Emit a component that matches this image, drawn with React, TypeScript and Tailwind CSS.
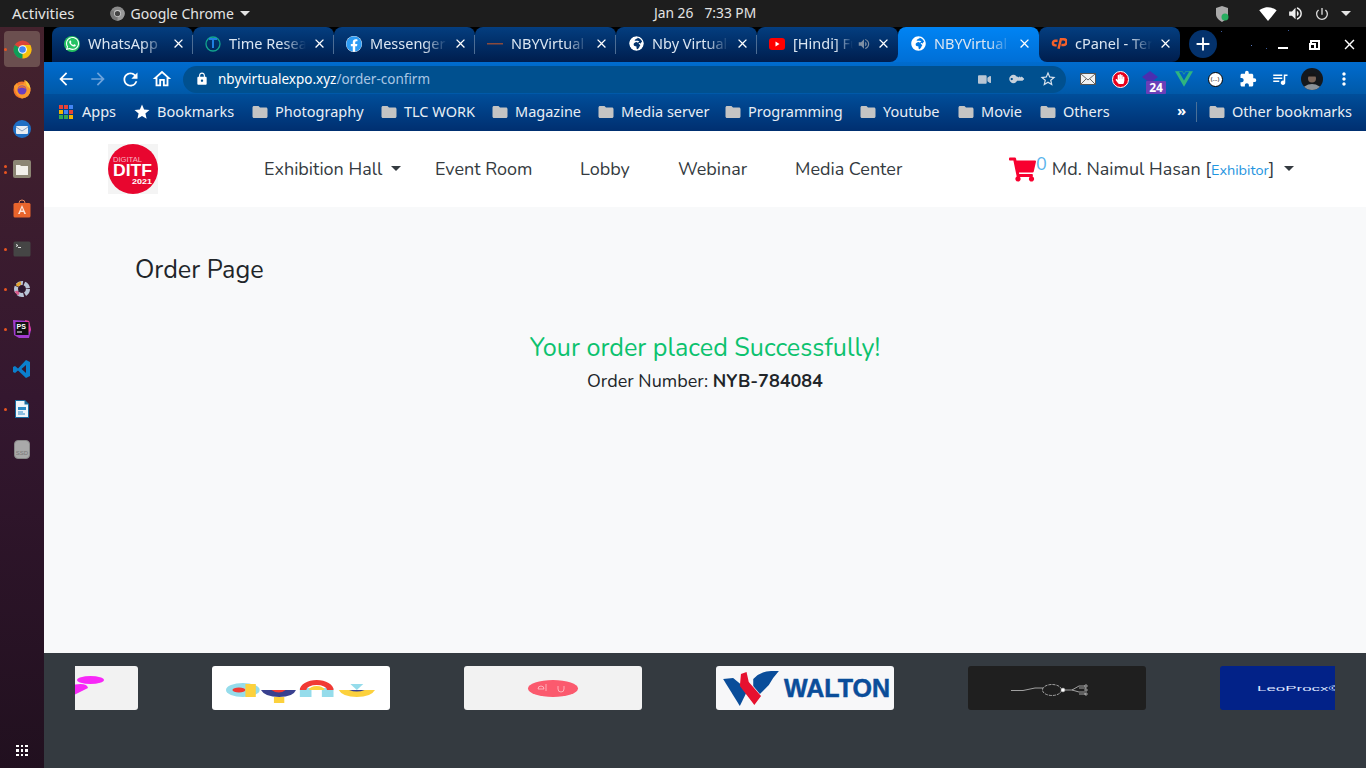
import React from "react";
import { FaFacebook, FaGlobeAfrica, FaHandPaper, FaKey, FaShoppingCart, FaVideo, FaWhatsapp } from "react-icons/fa";
import { SiVuedotjs } from "react-icons/si";
import {
  MdAdd,
  MdArrowBack,
  MdArrowForward,
  MdClose,
  MdExtension,
  MdFolder,
  MdLock,
  MdMoreVert,
  MdOutlineHome,
  MdPowerSettingsNew,
  MdQueueMusic,
  MdRefresh,
  MdSignalWifi4Bar,
  MdStar,
  MdStarBorder,
  MdVolumeUp,
} from "react-icons/md";

const ChromeLogo = ({ size = 20, grey = false }: { size?: number; grey?: boolean }) => (
  <svg width={size} height={size} viewBox="0 0 20 20">
    <circle cx="10" cy="10" r="9.5" fill={grey ? "#8a8a8a" : "#db4437"} />
    <path d="M10 10 L1.8 5.2 A9.5 9.5 0 0 0 10 19.5 L14.8 11z" fill={grey ? "#777" : "#0f9d58"} />
    <path d="M10 10 L10 19.5 A9.5 9.5 0 0 0 18.2 5.2 L10 5.2z" fill={grey ? "#999" : "#f4c20d"} />
    <circle cx="10" cy="10" r="4.6" fill={grey ? "#ccc" : "#fff"} />
    <circle cx="10" cy="10" r="3.5" fill={grey ? "#444" : "#4285f4"} />
  </svg>
);

const DockItem = ({ dots = 0, active = false, children }: { dots?: number; active?: boolean; children: React.ReactNode }) => (
  <div className="relative h-10 w-[44px] flex items-center justify-center">
    {dots > 0 && (
      <div className="absolute left-[4px] top-0 bottom-0 flex flex-col justify-center gap-[3px]">
        {Array.from({ length: dots }).map((_, i) => (
          <span key={i} className="block w-[3px] h-[3px] rounded-full bg-[#e95420]" />
        ))}
      </div>
    )}
    <div className={`w-9 h-9 flex items-center justify-center rounded ${active ? "bg-[#6b4f4f]" : ""}`}>{children}</div>
  </div>
);

const Dock = () => (
  <div className="w-[44px] shrink-0 bg-gradient-to-b from-[#44222d] via-[#34172f] to-[#21101f] flex flex-col items-center pt-[2px] relative">
    <DockItem dots={1} active>
      <ChromeLogo size={19} />
    </DockItem>
    <DockItem>
      <svg width="20" height="20" viewBox="0 0 20 20">
        <circle cx="10" cy="11" r="8.500" fill="#f2762a" />
        <path d="M2 7q1 9 8 12.500 8-1 8.500-8.500Q18 4 12 1q1 3-1 4-4 0-5 2L5 4z" fill="#fb9a2e" />
        <path d="M13 1q5 3 5.500 9L15 7z" fill="#fcc93c" />
        <circle cx="10" cy="11" r="4.500" fill="#6b3fc0" />
        <path d="M6 10q4-3 8 0-1-3-4-3t-4 3z" fill="#f2762a" />
      </svg>
    </DockItem>
    <DockItem>
      <svg width="20" height="20" viewBox="0 0 20 20">
        <circle cx="10" cy="10" r="9" fill="#1f6fc4" />
        <rect x="4" y="7" width="12" height="8" rx="1" fill="#e8edf3" />
        <path d="M4 8l6 4 6-4" fill="none" stroke="#8aa4c0" />
      </svg>
    </DockItem>
    <DockItem dots={2}>
      <svg width="20" height="20" viewBox="0 0 20 20">
        <rect x="1" y="1" width="18" height="18" rx="2" fill="#8c8674" />
        <path d="M4 6h4l1 1h7v9H4z" fill="#f2f0ea" />
      </svg>
    </DockItem>
    <DockItem>
      <svg width="20" height="20" viewBox="0 0 20 20">
        <path d="M7 4a3 3 0 016 0" fill="none" stroke="#e8875a" />
        <rect x="1.500" y="4" width="17" height="14.500" rx="1.500" fill="#e8642c" />
        <path d="M10 6l4 9h-1.800l-.7-2H8.500l-.7 2H6zM9 11.500h2L10 8.700z" fill="#fbe3d8" />
      </svg>
    </DockItem>
    <DockItem dots={1}>
      <svg width="20" height="20" viewBox="0 0 20 20">
        <rect x="1.500" y="2.500" width="17" height="15" rx="1.500" fill="#454545" />
        <path d="M4 5.500l2 1-2 1M6 8.500h3" fill="none" stroke="#eee" strokeWidth="0.900" />
      </svg>
    </DockItem>
    <DockItem dots={1}>
      <svg width="20" height="20" viewBox="0 0 20 20">
        <circle cx="10" cy="10" r="6" fill="none" stroke="#b9c4d6" strokeWidth="4" strokeDasharray="6 1.500" />
        <path d="M5 7a6 6 0 014-3" fill="none" stroke="#e3a32c" strokeWidth="3" />
        <path d="M4 12a6 6 0 003 3" fill="none" stroke="#d95b8c" strokeWidth="3" />
        <circle cx="10" cy="10" r="3" fill="#2b1830" />
      </svg>
    </DockItem>
    <DockItem dots={1}>
      <svg width="20" height="20" viewBox="0 0 20 20">
        <path d="M1 1l16 1 2 9-2 8-10 0-5-3z" fill="#a23bd0" />
        <path d="M13 1l4 1 2 9-3 3z" fill="#e83d9b" />
        <rect x="3.500" y="3" width="13" height="13" fill="#111" />
        <text x="4.500" y="9.500" fontSize="7" fontWeight="700" fill="#fff" fontFamily="Liberation Sans, sans-serif">PS</text>
        <rect x="5" y="12.500" width="5" height="1" fill="#fff" />
      </svg>
    </DockItem>
    <DockItem>
      <svg width="20" height="20" viewBox="0 0 20 20">
        <path d="M14 1l4 2v14l-4 2-8-7.500-3 2.500-2-1v-5l2-1 3 2.500zM14 6l-4.500 4 4.500 4z" fill="#0b7fcc" />
      </svg>
    </DockItem>
    <DockItem dots={1}>
      <svg width="20" height="20" viewBox="0 0 20 20">
        <path d="M3 1h10l4 4v14H3z" fill="#176a9e" />
        <path d="M4 2h8.500v3.500H16V18H4z" fill="#eef5fa" />
        <rect x="6" y="8" width="8" height="3" fill="#2a8ac6" />
        <rect x="6" y="12.500" width="5" height="1" fill="#2a8ac6" />
        <rect x="6" y="14.500" width="7" height="1" fill="#2a8ac6" />
      </svg>
    </DockItem>
    <DockItem>
      <div className="w-[16px] h-[19px] rounded-sm bg-[#a9a9a9] border border-[#888] flex items-end justify-center">
        <span className="text-[6px] leading-[9px] text-[#777] font-['Liberation_Sans',sans-serif]">SSD</span>
      </div>
    </DockItem>
    <div className="absolute bottom-[12px] left-[16px] grid grid-cols-3 gap-[2px]">
      {Array.from({ length: 9 }).map((_, i) => (
        <span key={i} className="block w-[2.500px] h-[2.500px] bg-white" />
      ))}
    </div>
  </div>
);

const tabs: { title: string; icon: React.ReactNode; audio?: boolean; active?: boolean }[] = [
  {
    title: "WhatsApp",
    icon: (
      <span className="w-4 h-4 rounded-full bg-[#25c262] flex items-center justify-center">
        <FaWhatsapp size={15} className="text-white" />
      </span>
    ),
  },
  {
    title: "Time Research",
    icon: (
      <svg width="16" height="16" viewBox="0 0 16 16">
        <circle cx="8" cy="8" r="7" fill="none" stroke="#12a58e" strokeWidth="1.300" />
        <path d="M4 3h8M8 3v9" stroke="#1f7fe0" strokeWidth="2" />
      </svg>
    ),
  },
  { title: "Messenger", icon: <FaFacebook size={16} className="text-[#2d9cf4] bg-white rounded-full" /> },
  {
    title: "NBYVirtual Expo",
    icon: (
      <svg width="16" height="16" viewBox="0 0 16 16">
        <rect x="0" y="7" width="16" height="1.500" fill="#8a4a3c" />
      </svg>
    ),
  },
  { title: "Nby Virtual Expo", icon: <FaGlobeAfrica size={15} className="text-white bg-[#03346e] rounded-full" /> },
  {
    title: "[Hindi] Full Course",
    icon: (
      <svg width="16" height="12" viewBox="0 0 16 12">
        <rect width="16" height="12" rx="3" fill="#f00" />
        <path d="M6.500 3.500l4 2.500-4 2.500z" fill="#fff" />
      </svg>
    ),
    audio: true,
  },
  { title: "NBYVirtual Expo", icon: <FaGlobeAfrica size={15} className="text-white" />, active: true },
  {
    title: "cPanel - Terminal",
    icon: (
      <svg width="17" height="13" viewBox="0 0 17 13" fill="none" stroke="#f4602a" strokeWidth="2.600">
        <path d="M7 3.500H4.500a2.500 2.500 0 000 5H6" />
        <path d="M8 12l2.500-10h3a2.500 2.500 0 010 6H11" />
      </svg>
    ),
  },
];

const Tab = ({ title, icon, audio, active, before, after }: { title: string; icon: React.ReactNode; audio?: boolean; active?: boolean; before?: boolean; after?: boolean }) => (
  <div
    className={`relative w-[141px] h-full shrink-0 flex items-center pl-[12px] pr-[7px] pb-[2px] rounded-t-[8px] ${
      active
        ? "z-0 bg-gradient-to-b from-[#0084f4] to-[#006fd6] before:absolute before:-left-[8px] before:bottom-0 before:w-[8px] before:h-[8px] before:bg-[#0070d8] after:absolute after:-right-[8px] after:bottom-0 after:w-[8px] after:h-[8px] after:bg-[#0070d8]"
        : "z-10 bg-gradient-to-b from-[#043e80] to-[#001e4e]"
    } ${before ? "rounded-br-[8px]" : ""} ${after ? "rounded-b-[8px]" : ""}`}
  >
    <span className="w-4 h-4 shrink-0 flex items-center justify-center">{icon}</span>
    <span className="ml-[8px] flex-1 min-w-0 overflow-hidden whitespace-nowrap text-[14.500px] text-[#dbe6f2] [mask-image:linear-gradient(to_right,black_70%,transparent_100%)]">
      {title}
    </span>
    {audio && <MdVolumeUp size={14} className="text-[#7f8fa3] -mr-[1px] ml-[4px] shrink-0" />}
    <MdClose size={15} className="text-white shrink-0 ml-[6px]" />
    {!active && !before && !after && <span className="absolute right-0 top-[8px] bottom-[8px] w-px bg-[#4d6d94]" />}
  </div>
);

const TabStrip = () => (
  <div className="h-[35px] bg-black flex items-stretch pl-[8px] relative">
    {tabs.map((t, i) => (
      <Tab key={i} {...t} before={i === 5} after={i === 7} />
    ))}
    <div className="ml-[9px] mt-[3px] w-7 h-7 rounded-full bg-[#04326c] flex items-center justify-center">
      <MdAdd size={22} className="text-white" />
    </div>
    <div className="flex-1 flex items-center justify-end pr-[8px] gap-[17px] text-white">
      <span className="block w-[10px] h-[2px] bg-white mt-[6px] mr-[5px]" />
      <span className="relative block w-[10px] h-[10px] border-2 border-white mr-[4px]">
        <span className="absolute -left-[3px] top-[1px] w-[7px] h-[7px] bg-black border-2 border-white" />
      </span>
      <MdClose size={17} />
    </div>
    <span className="absolute left-[1177px] top-[4px] w-px h-px bg-[#3b5a9a]" />
    <span className="absolute left-[1207px] top-[18px] w-px h-px bg-[#5a7ac0]" />
    <span className="absolute left-[1222px] top-[21px] w-px h-px bg-[#3b5a9a]" />
    <span className="absolute left-[1244px] top-[3px] w-px h-px bg-[#3b5a9a]" />
  </div>
);

const ToolIcon = ({ children, className = "" }: { children: React.ReactNode; className?: string }) => (
  <div className={`w-8 h-8 shrink-0 flex items-center justify-center relative ${className}`}>{children}</div>
);

const Toolbar = () => (
  <div className="h-[32px] bg-gradient-to-b from-[#006ccf] to-[#0059a8] flex items-center pl-[6px] pt-[2px] text-white">
    <ToolIcon>
      <MdArrowBack size={20} />
    </ToolIcon>
    <ToolIcon>
      <MdArrowForward size={20} className="text-[#6ea4dc]" />
    </ToolIcon>
    <ToolIcon>
      <MdRefresh size={21} />
    </ToolIcon>
    <ToolIcon>
      <MdOutlineHome size={22} />
    </ToolIcon>
    <div className="ml-[5px] w-[883px] h-[27px] rounded-full bg-[#00508f] flex items-center pl-[12px] pr-[2px]">
      <MdLock size={14} className="text-white" />
      <span className="ml-[9px] text-[13.500px] text-white">
        nbyvirtualexpo.xyz<span className="text-[#a9c6e4]">/order-confirm</span>
      </span>
      <div className="ml-auto flex items-center">
        <ToolIcon>
          <FaVideo size={13} className="text-[#b9c6d4]" />
        </ToolIcon>
        <ToolIcon>
          <FaKey size={12} className="text-[#c6d1dc] -rotate-[135deg]" />
        </ToolIcon>
        <ToolIcon>
          <MdStarBorder size={18} className="text-[#dbe4ee]" />
        </ToolIcon>
      </div>
    </div>
    <ToolIcon className="ml-[6px]">
      <svg width="16" height="12" viewBox="0 0 16 12">
        <rect width="16" height="12" fill="#555" />
        <rect x="1" y="1" width="14" height="10" fill="#f2f2f2" />
        <path d="M1 1l7 6 7-6M1 11l5-5M15 11l-5-5" fill="none" stroke="#666" />
      </svg>
    </ToolIcon>
    <ToolIcon>
      <span className="w-[17px] h-[17px] rounded-full bg-[#e8001c] flex items-center justify-center border border-white">
        <FaHandPaper size={10} className="text-white" />
      </span>
    </ToolIcon>
    <ToolIcon>
      <svg width="16" height="12" viewBox="0 0 16 12" className="-mt-[4px] -ml-[4px]">
        <path d="M8 0l8 6-8 6-8-6z" fill="#4a2fb0" />
      </svg>
      <span className="absolute left-[10px] top-[18px] w-[20px] h-[13px] rounded-[1px] bg-[#6a3fb8] text-[12px] leading-[13px] font-bold text-center text-white">24</span>
    </ToolIcon>
    <ToolIcon className="-mr-[1px]">
      <SiVuedotjs size={18} className="text-[#2fb57f]" />
    </ToolIcon>
    <ToolIcon>
      <span className="w-[15px] h-[15px] rounded-full bg-white border border-black text-black text-[6px] leading-[13px] text-center">(...)</span>
    </ToolIcon>
    <ToolIcon className="ml-[1px]">
      <MdExtension size={18} />
    </ToolIcon>
    <ToolIcon>
      <MdQueueMusic size={18} />
    </ToolIcon>
    <ToolIcon>
      <svg width="22" height="22" viewBox="0 0 22 22">
        <defs>
          <clipPath id="av">
            <circle cx="11" cy="11" r="11" />
          </clipPath>
        </defs>
        <g clipPath="url(#av)">
          <rect width="22" height="22" fill="#14181c" />
          <ellipse cx="11" cy="24" rx="10" ry="8" fill="#8a9299" />
          <circle cx="11" cy="10.500" r="4" fill="#7a6558" />
          <path d="M7 8.500a4 3 0 018 0z" fill="#151515" />
        </g>
      </svg>
    </ToolIcon>
    <ToolIcon>
      <MdMoreVert size={20} />
    </ToolIcon>
  </div>
);

const bookmarks = [
  { label: "Photography", w: "w-[129px]" },
  { label: "TLC WORK", w: "w-[111px]" },
  { label: "Magazine", w: "w-[106px]" },
  { label: "Media server", w: "w-[127px]" },
  { label: "Programming", w: "w-[135px]" },
  { label: "Youtube", w: "w-[98px]" },
  { label: "Movie", w: "w-[82px]" },
  { label: "Others", w: "w-[137px]" },
];

const Bookmark = ({ label, w }: { label: string; w?: string }) => (
  <div className={`flex items-center shrink-0 ${w ?? ""}`}>
    <MdFolder size={18} className="text-[#c4c4c4] -ml-[1px] mr-[6px] shrink-0" />
    <span className="whitespace-nowrap">{label}</span>
  </div>
);

const BookmarkBar = () => (
  <div className="h-[37px] bg-gradient-to-b from-[#004e9a] to-[#002f70] flex items-center pl-[15px] pb-[2px] text-[14.500px] text-[#e8eef5]">
    <div className="w-[75px] flex items-center shrink-0">
      <div className="grid grid-cols-3 gap-[1px] mr-[9px]">
        {["#e94235", "#e94235", "#4285f4", "#f4b400", "#4285f4", "#e94235", "#34a853", "#34a853", "#f4b400"].map((c, i) => (
          <span key={i} className="block w-[4px] h-[4px]" style={{ background: c }} />
        ))}
      </div>
      <span>Apps</span>
    </div>
    <div className="w-[118px] flex items-center shrink-0">
      <MdStar size={18} className="text-white -ml-[1px] mr-[6px]" />
      <span>Bookmarks</span>
    </div>
    {bookmarks.map((b) => (
      <Bookmark key={b.label} {...b} />
    ))}
    <div className="text-white text-[15px] font-bold leading-none -mt-[3px] w-[19px] shrink-0">»</div>
    <div className="w-px h-[20px] bg-[#4a7098] mr-[12px]" />
    <Bookmark label="Other bookmarks" />
  </div>
);

const TopBar = () => (
  <div className="h-[27px] bg-[#1d1d1d] relative flex items-center pl-[12px] text-[14px] text-[#e4e4e4]">
    <span className="text-[15px]">Activities</span>
    <div className="ml-[35px] flex items-center">
      <ChromeLogo size={15} grey />
      <span className="ml-[6px]">Google Chrome</span>
      <span className="ml-[6px] w-0 h-0 border-x-[5px] border-x-transparent border-t-[5px] border-t-[#e4e4e4]" />
    </div>
    <div className="absolute left-[654px] top-0 h-full flex items-center gap-[11px] text-[13.800px]">
      <span>Jan 26</span>
      <span>7:33 PM</span>
    </div>
    <div className="ml-auto flex items-center pr-[15px]">
      <svg width="14" height="16" viewBox="0 0 14 16">
        <path d="M1 2l6-2 6 2v6c0 4-3 6-6 8-3-2-6-4-6-8z" fill="#aaa" />
        <circle cx="10" cy="11" r="3.500" fill="#27ae60" />
      </svg>
      <MdSignalWifi4Bar size={18} className="ml-[30px] text-white" />
      <MdVolumeUp size={17} className="ml-[10px] text-[#eee]" />
      <MdPowerSettingsNew size={16} className="ml-[10px] text-[#ddd]" />
      <span className="ml-[11px] w-0 h-0 border-x-[5px] border-x-transparent border-t-[5px] border-t-[#e4e4e4]" />
    </div>
  </div>
);

const navLinks = [
  { label: "Event Room", w: "w-[145px]" },
  { label: "Lobby", w: "w-[98px]" },
  { label: "Webinar", w: "w-[117px]" },
  { label: "Media Center", w: "w-[214px]" },
];

const Navbar = () => (
  <div className="h-[76px] bg-white flex items-center pl-[64px] text-[18px] text-[#343a40] font-['Nunito','Open_Sans',sans-serif]">
    <div className="w-[50px] h-[50px] bg-[#f4f4f4] shrink-0">
      <svg width="50" height="50" viewBox="0 0 50 50">
        <circle cx="25" cy="25" r="25" fill="#e8062f" />
        <text x="5" y="18" fontSize="7" textLength="29" lengthAdjust="spacingAndGlyphs" fill="#f7b6c2" fontFamily="Liberation Sans, sans-serif">DIGITAL</text>
        <text x="5" y="31.500" fontSize="16.500" textLength="39" lengthAdjust="spacingAndGlyphs" fontWeight="700" fill="#fff" fontFamily="Liberation Sans, sans-serif">DITF</text>
        <text x="24" y="40" fontSize="7.500" textLength="20" lengthAdjust="spacingAndGlyphs" fontWeight="700" fill="#fff" fontFamily="Liberation Sans, sans-serif">2021</text>
      </svg>
    </div>
    <div className="ml-[106px] w-[171px] flex items-center shrink-0">
      <span>Exhibition Hall</span>
      <span className="ml-[9px] w-0 h-0 border-x-[5.500px] border-x-transparent border-t-[5.500px] border-t-[#343a40] -mt-[2px]" />
    </div>
    {navLinks.map((l) => (
      <span key={l.label} className={`${l.w} shrink-0`}>
        {l.label}
      </span>
    ))}
    <FaShoppingCart size={27} className="text-[#f8002f] shrink-0" />
    <span className="text-[#5ab4ec] -mt-[9px]">0</span>
    <span className="ml-[5px] whitespace-nowrap">
      Md. Naimul Hasan [<span className="text-[#1f95e0] text-[14.500px]">Exhibitor</span>]
    </span>
    <span className="ml-[10px] w-0 h-0 border-x-[5.500px] border-x-transparent border-t-[5.500px] border-t-[#343a40] -mt-[2px]" />
  </div>
);

const logos: { bg: string; art: React.ReactNode }[] = [
  {
    bg: "bg-[#f2f2f2]",
    art: (
      <svg width="178" height="44" viewBox="0 0 178 44">
        <ellipse cx="130.500" cy="14" rx="13.500" ry="4" fill="#f728f7" />
        <path d="M112 19q15-3 16 3l-14 7z" fill="#f728f7" />
      </svg>
    ),
  },
  {
    bg: "bg-white",
    art: (
      <svg width="178" height="44" viewBox="4.200 0 137.400 44" preserveAspectRatio="none">
        <ellipse cx="28" cy="24" rx="13" ry="7" fill="#95dceb" />
        <ellipse cx="25" cy="24" rx="5" ry="2.500" fill="#f13a34" />
        <rect x="30" y="18" width="8" height="13" fill="#fcd13d" />
        <path d="M42 24h27q-2 7-13 7t-14-7z" fill="#39408f" />
        <path d="M50 24h11q-5 5-11 0z" fill="#f13a34" />
        <rect x="52" y="31" width="8" height="6" fill="#fcd13d" />
        <rect x="72" y="22" width="9" height="9" fill="#95dceb" />
        <rect x="89" y="22" width="9" height="9" fill="#95dceb" />
        <path d="M72 24a13 10 0 0126 0h-5a8 5 0 00-16 0z" fill="#f13a34" />
        <path d="M79 24a6 4 0 0112 0z" fill="#fcd13d" />
        <path d="M111 18h10l-5 6z" fill="#95dceb" />
        <path d="M102 24h28q-3 7-14 7t-14-7z" fill="#fcd13d" />
        <path d="M110 24h12q-6 3-12 0z" fill="#39408f" />
      </svg>
    ),
  },
  {
    bg: "bg-[#f2f2f2]",
    art: (
      <svg width="178" height="44" viewBox="0 0 178 44">
        <ellipse cx="89" cy="22.500" rx="25" ry="8.500" fill="#fb5a6e" />
        <path d="M74 23a3 3 0 016 0h-6M82 18v7M94 20v3a3 3 0 006 0v-3" fill="none" stroke="#ffd5da" strokeWidth="0.700" />
      </svg>
    ),
  },
  {
    bg: "bg-[#f7f7f9]",
    art: (
      <div className="w-full h-full flex items-center pl-[6px]">
        <svg width="58" height="36" viewBox="0 0 52 36" preserveAspectRatio="none" className="shrink-0">
          <path d="M1 9l9-1 13 12-7 16z" fill="#0a4d9a" />
          <path d="M17 4l5-2 2 10 11 14-6 9-13-19z" fill="#e6112f" />
          <path d="M28 9q7-8 16-8h7q-5 6-9 14l-8 9-6-8z" fill="#0a4d9a" />
        </svg>
        <span className="ml-[4px] text-[25px] leading-none font-bold text-[#0a4d9a] font-['Liberation_Sans',sans-serif] [-webkit-text-stroke:0.5px_#0a4d9a]">
          WALTON
        </span>
      </div>
    ),
  },
  {
    bg: "bg-[#1f1f1f]",
    art: (
      <svg width="178" height="44" viewBox="0 0 178 44" fill="none" stroke="#d9d9d9" strokeWidth="0.700">
        <path d="M43 24.500h12l12-2.500h8M75 24h0" />
        <ellipse cx="84" cy="24" rx="9.500" ry="5.500" strokeDasharray="3 1" />
        <circle cx="95" cy="24" r="1.800" fill="#fff" />
        <path d="M97 24h7l7-4h6M104 24l7 2h6M111 22h7M111 28h7" />
        <circle cx="118" cy="20" r="1.200" />
        <circle cx="118" cy="24" r="1.200" />
        <circle cx="118" cy="28" r="1.200" />
      </svg>
    ),
  },
  {
    bg: "bg-[#022288]",
    art: (
      <svg width="178" height="44" viewBox="0 0 178 44">
        <text x="37" y="24.500" fontSize="8" textLength="84" lengthAdjust="spacingAndGlyphs" fill="#dfe6ff" fontFamily="Liberation Sans, sans-serif">LeoProcx©</text>
      </svg>
    ),
  },
];

const Footer = () => (
  <div className="h-[115px] bg-[#343a40] pt-[13px] pl-[31px]">
    <div className="w-[1260px] h-[44px] overflow-hidden flex gap-[74px]">
      {logos.map((l, i) => (
        <div key={i} className={`w-[178px] h-[44px] rounded-[3px] shrink-0 overflow-hidden ${l.bg} ${i === 0 ? "-ml-[115px]" : ""}`}>
          {l.art}
        </div>
      ))}
    </div>
  </div>
);

export default function App() {
  return (
    <div className="w-[1366px] h-[768px] overflow-hidden flex flex-col font-['Noto_Sans',sans-serif]">
      <TopBar />
      <div className="flex-1 min-h-0 flex">
        <Dock />
        <div className="flex-1 min-w-0 flex flex-col">
          <TabStrip />
          <Toolbar />
          <BookmarkBar />
          <Navbar />
          <div className="flex-1 bg-[#f8f9fa] pl-[91px] pt-[47px] font-['Nunito','Open_Sans',sans-serif] text-[#212529]">
            <h1 className="text-[25.200px] leading-[32px]">Order Page</h1>
            <div className="-ml-[91px] mt-[44px] text-center">
              <p className="text-[25.200px] leading-[36px] text-[#0cc26e]">Your order placed Successfully!</p>
              <p className="text-[18px] leading-[30px]">
                Order Number: <b className="font-bold">NYB-784084</b>
              </p>
            </div>
          </div>
          <Footer />
        </div>
      </div>
    </div>
  );
}
